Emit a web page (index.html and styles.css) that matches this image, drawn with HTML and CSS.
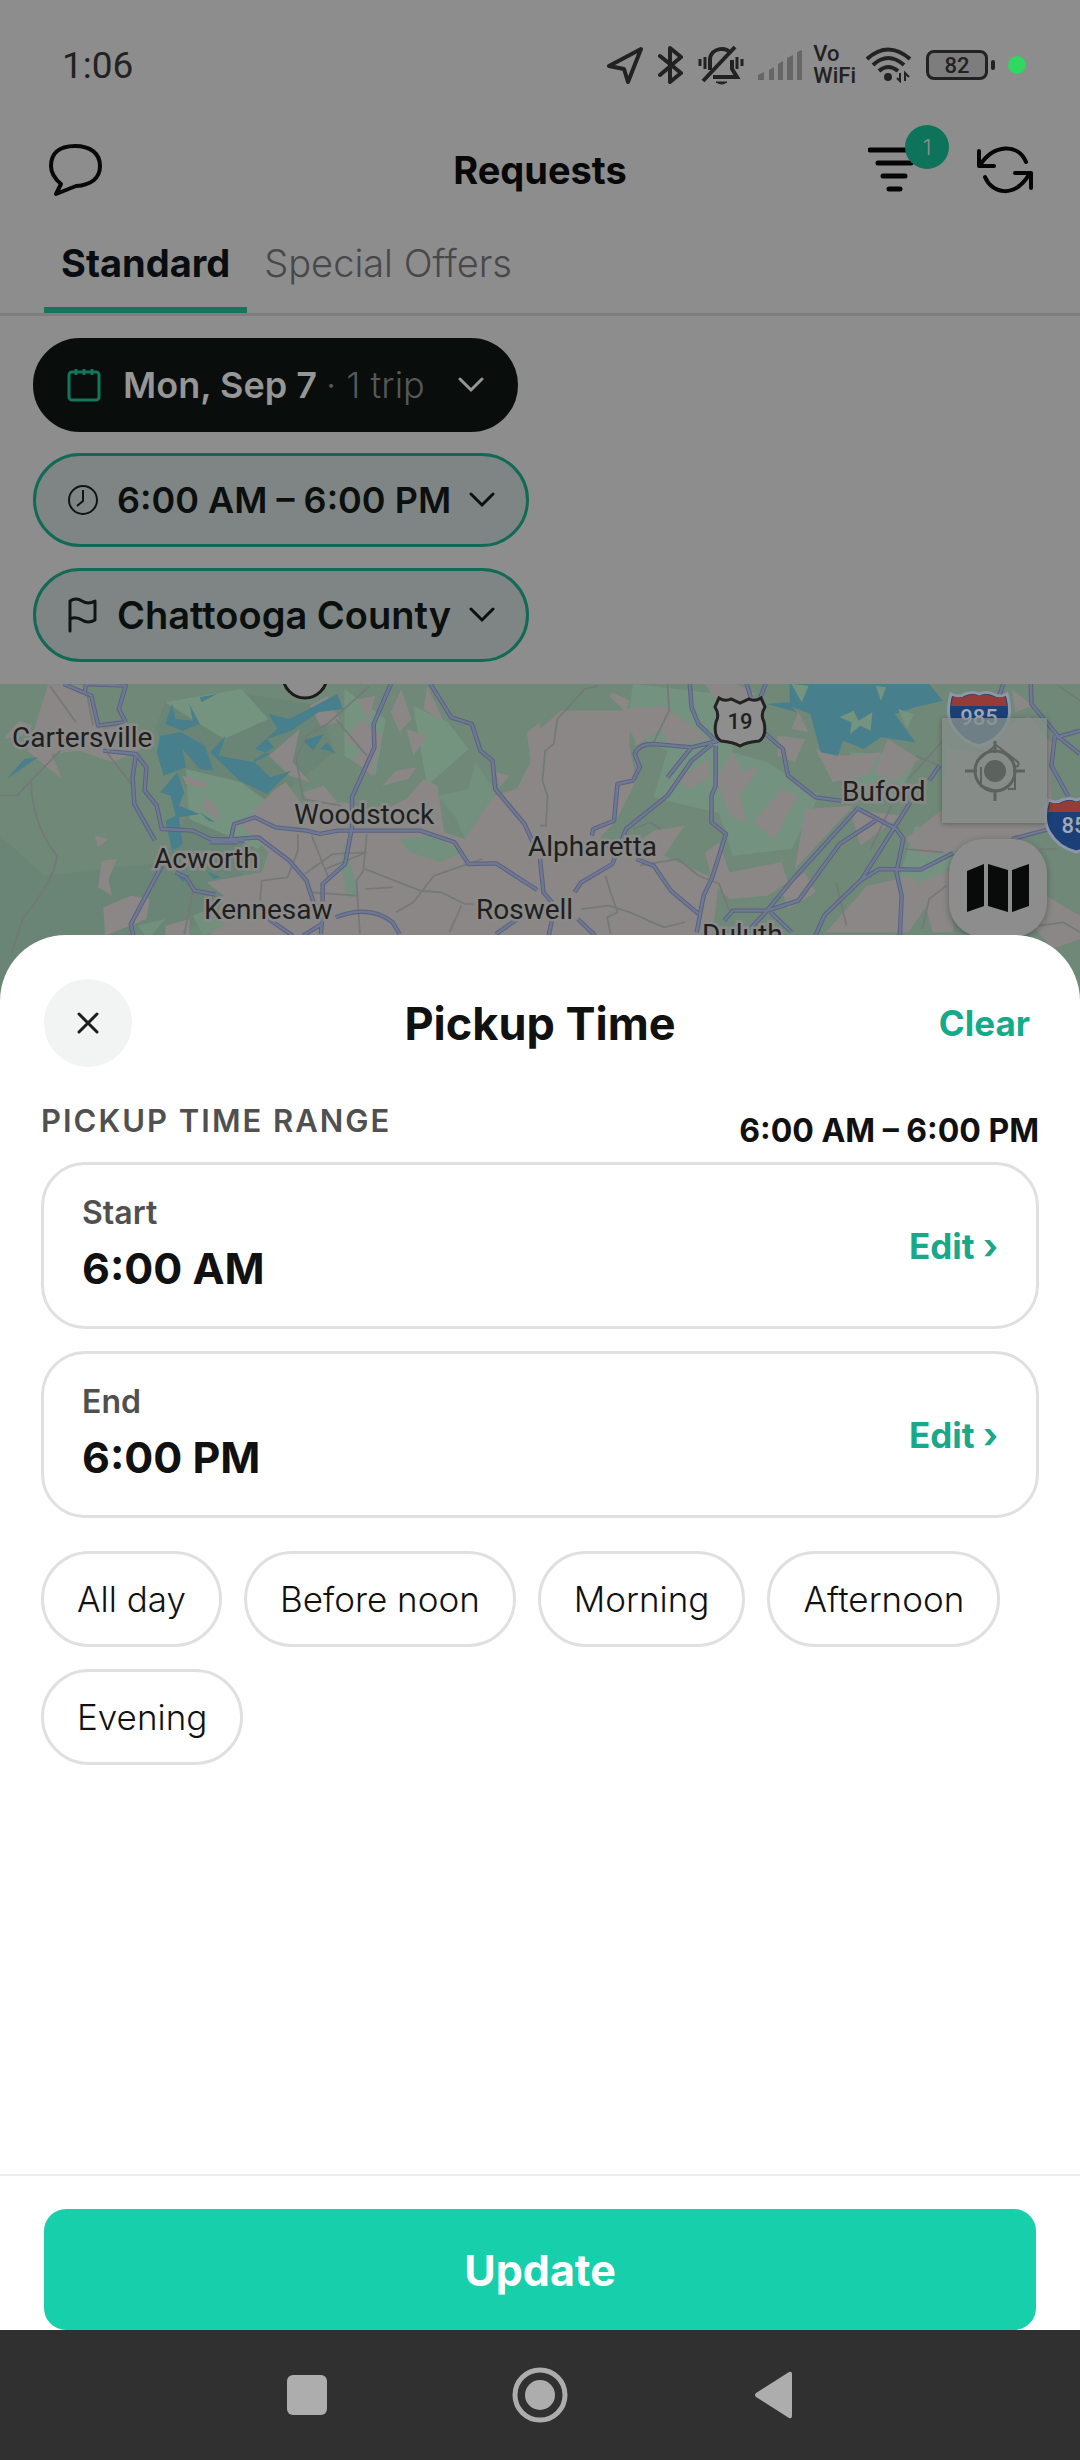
FILE: index.html
```html
<!DOCTYPE html>
<html lang="en">
<head>
    <meta charset="UTF-8">
    <meta name="viewport" content="width=device-width, initial-scale=1.0">
    <title>Requests</title>
    <link rel="stylesheet" href="styles.css">
</head>
<body>
    <div class="status-bar">
        <span class="clock">1:06</span>
        <div class="status-icons">
            <svg width="37" height="38" viewBox="0 0 37 38" fill="none" stroke="#222" stroke-width="4" stroke-linejoin="round"><path d="M34 3 2 20l15 3 4 13z"/></svg>
            <svg class="bluetooth" width="26" height="40" viewBox="0 0 26 40" fill="none" stroke="#222" stroke-width="4" stroke-linejoin="round" stroke-linecap="round"><path d="M2 11 23 28 12 37V3l11 9L2 30"/></svg>
            <svg class="bell" width="46" height="40" viewBox="0 0 46 40" fill="none" stroke="#222" stroke-width="3"><path d="M12 25V15C12 2 31 1 32 9M34 15v9l5 8H15M5 36 37 2" stroke-width="4"/><path d="M18 37h11q-5 4-11 0z" fill="#222" stroke-width="1"/><path d="M2 14v7M7 12v12M39 12v12M44 14v7"/></svg>
            <svg class="signal" width="45" height="30" viewBox="0 0 45 30" fill="#666"><path d="M0 25l6-3v8H0zM11 20l5-3v13h-5zM20 14l5-3v19h-5zM29 8l6-3v25h-6zM39 2l5-2v30h-5z"/></svg>
            <span class="vowifi"><span>Vo</span><span>WiFi</span></span>
            <svg class="wifi" width="46" height="36" viewBox="0 0 46 36" fill="none" stroke="#222" stroke-width="4"><path d="M1 12Q22-7 44 12M7 18Q22 4 38 18M13 24q9-8 19 0"/><circle cx="22" cy="30" r="2"/><path d="M34 26v8l-3-3M39 34v-8l4 4" stroke-width="2"/></svg>
            <span class="battery">82</span>
            <span class="dot"></span>
        </div>
    </div>

    <header class="header">
        <button class="icon-button" aria-label="Messages">
            <svg width="56" height="54" viewBox="0 0 56 54" fill="none" stroke="#080808" stroke-width="4" stroke-linejoin="round"><path d="M29 3C12 3 5 11 5 23c0 8 4 13 10 18L10 51l20-8C45 42 54 35 54 23 54 10 44 3 29 3z"/></svg>
        </button>
        <h1>Requests</h1>
        <div class="header-actions">
            <button class="icon-button filter" aria-label="Filters">
                <svg width="50" height="48" viewBox="0 0 50 48" stroke="#050505" stroke-width="5" stroke-linecap="round"><path d="M2 4h42M10 17h33M15 30h22M21 43h11"/></svg>
                <span class="badge">1</span>
            </button>
            <button class="icon-button" aria-label="Refresh">
                <svg width="58" height="50" viewBox="0 0 58 50" fill="none" stroke="#050505" stroke-width="4" stroke-linecap="round" stroke-linejoin="round"><path d="M3 6v15h15M4 20C18-1 42-2 50 17M9 32c7 17 30 22 45-4M39 28h16v15"/></svg>
            </button>
        </div>
    </header>

    <nav class="tabs">
        <button class="tab active">Standard</button>
        <button class="tab">Special Offers</button>
    </nav>

    <div class="filters">
        <button class="pill dark">
            <svg width="34" height="34" viewBox="0 0 34 34" fill="none" stroke="#14745c" stroke-width="3"><rect x="2" y="4" width="30" height="28" rx="3"/><path d="M9 1v6M17 1v6M25 1v6"/></svg>
            <span class="pill-text">Mon, Sep 7 <span class="trips">· 1 trip</span></span>
            <svg class="chevron" width="26" height="16" viewBox="0 0 26 16"><path d="M2 2l11 11L24 2"/></svg>
        </button>
        <button class="pill">
            <svg width="32" height="32" viewBox="0 0 32 32" fill="none" stroke="#101414" stroke-width="2"><circle cx="16" cy="16" r="14"/><path d="M16 6v11l-6 5"/></svg>
            <span class="pill-text">6:00 AM – 6:00 PM</span>
            <svg class="chevron" width="26" height="16" viewBox="0 0 26 16"><path d="M2 2l11 11L24 2"/></svg>
        </button>
        <button class="pill place">
            <svg width="32" height="36" viewBox="0 0 32 36" fill="none" stroke="#101414" stroke-width="3" stroke-linejoin="round" stroke-linecap="round"><path d="M3 34V4q6-4 12 0t13 0v19q-7 4-13 0T3 22"/></svg>
            <span class="pill-text">Chattooga County</span>
            <svg class="chevron" width="26" height="16" viewBox="0 0 26 16"><path d="M2 2l11 11L24 2"/></svg>
        </button>
    </div>

    <div class="map">
        <svg class="map-canvas" viewBox="0 0 1080 317" preserveAspectRatio="xMidYMin slice">
            <defs>
                <!-- the west and east tiles are drawn on a 1568 x 990 grid -->
                <g id="roads-west">
                    <path d="M185 45l80 35 20 90 70-10M245 75l5-30 115 5-20 70 20 40M300 245l95 10-10 70 5 80 60 110M395 255l30 40-5 70 35 45 15 70 90 5 60 30 130-10 90 70 50 60 25 80M475 480l85 5 50 25 100 5M670 510l10-45 60-20 60 30 90 10 40 10 50-10h240l100 35 40 65 80-2 120 80M1135 45l-50 120 2 70-65 150v90l-20 110-65 60v80l-5 70M470 590l-90 175 8 40M510 610l30 15 25 40 60 12M780 750l70 50M880 800l55-35M975 745q100-40 165 15l20 35M1250 45l60 100 60 20 25 80 35 30 8 85 85 105 35 80M1440 795l70-50M610 520h80"/>
                </g>
                <g id="roads-east">
                    <path d="M150 500l5-20 60-25 10-110 45-10 20-40-15-40q10-30 55-30l110 10 70-18M500 225l-60 50-70 105-120 100-40 105-90 55-20 30M435 45l5 70 20 50 55 55M510 230v120l-12 30v80l42 35-40 130-25 55-20 110M520 215l-80 20-70 90M600 45l12 40M655 45l-15 40M650 190l55 50 15 80 80 65 90 12M925 415L735 630l-80 100-45 50M975 455l-105 70-120 170-90 30h-100l-25 30M925 420l110 60 20 30-20 100 15 70-5 120M1075 400L935 630 825 740l-25 60M1160 290l-30 45M930 635l55-35 120 2 95-50M1370 510l110-30M280 570l50 20 50 75 80 70M0 570l10 100 50 60M110 750l50 50M40 730l-15 70M1425 45l2 60 80 100 61 50M1495 200l-10 90 50 95M1500 205l68-20M1345 45l-20 60M670 730l60 60"/>
                </g>
            </defs>

            <rect width="1080" height="317" fill="#708878"/>
            <g transform="translate(0 -15) scale(.3444 .3333)">
                <path fill="#688573" d="M130 620l340-40 90-180-110-220 30-80 210-30 240 40 40 140-190 160-90 250-200 180-280 150H0V500z" opacity=".7"/>
                <path fill="#759480" d="M480 100l220-40 80 90-130 60zM540 300l160 40 120 90-70 110-200-90zM1000 60l120 90-30 170-90-60zM1200 110l100 50 60 80-120 110z"/>
                <g class="land">
                    <path d="M610 800l40-120-50-40 160-30 20-60-80-80 50-60 50-50 30-20 50 70 120-10 100 30 80-40 50-60 40 20 20 140 60 20 20-110 130-40 40-80-10-90 38-30v640z"/>
                    <path d="M140 45l110 5 20 70 30 60 80-15 30 75-80 40-100-35-80 10 30 75-55-45-45-40zM295 575l45-5-25 60 10 50-40-25zM300 715l80-35 55 10-10 60-120 50zM10 210l45-55 40 15-30 30zM530 320l70 20v20l-60-15zM600 385l30 30 10 40-55-35zM275 500l40 10-30 25zM780 260l90-80-20 100 50 60-60-20zM900 110l50-30 40 80-60 10zM1000 210l50-60 60 50-30 120-60-50 30-20zM1040 90l50-10-20 80zM1165 60l30 90-35 40-25-60zM1180 180l60 20-40 60zM1110 350l40-45 60-10-25 35zM880 370l60-20 40 50-70 20zM1440 310l40 10-30 35zM480 770l70-20v50h-70zM1240 50l50 110-60-40z"/>
                </g>
                <path fill="#72907d" d="M1160 510l100-10 80 50-60 30-90-30zM1270 380l90-20 20-80 60 90-90 140-30-70zM1000 520l40 150-30 20-20-100zM400 770l80-20-50 60zM560 740l70-30 20 60-60 30z"/>
                <g class="water">
                    <path d="M500 105l10 45 50 5-10-50 30 60-50 20-50-20zM465 200l60-10 70 40 25 75-40-5-50-60 10 55-65 25-20-70zM610 250l45-50-20 60 100 20 50-25-45-15 65-60-25-45 60 15 140-75 15 45-70 10-80 55-70 25 20 25-60 40 50 50 60-20-70 70-80-40-40-40zM465 370l50-60 20 60-15 40 60 25-60 10 10 80-30 20-20-90 30-15-15-60zM880 215l60-20-30 50zM930 240l20-20 25 35-20-10zM20 330l50-60 40-5zM580 85l50-10-45 25zM580 430l45 30-20-5zM510 610l40 10-20 20zM600 605l40 20-20 5zM495 500l30-10-5 50-15-20z"/>
                </g>
                <g class="minor">
                    <path d="M145 50l75 110M250 60l20 110M175 245l-85 90-40 45H0M90 340q5 130 75 220 0 60-100 190L35 850M310 250l75 100M1075 50L950 165l-60 35-30 70 20 120M975 150l90 110M880 390l110 20M865 495v50l-30 80-75 10-5 60M905 500l50 130M1065 495l-10 110-20 30 10 160M945 600l120-50-100 5-80 60M1060 600l160 65 60 5 70 35h25M1400 570l-140 50-60 80-50 30M1060 660l80-5M560 670l-25 125M905 670l130 10M1340 710l-35 80"/>
                </g>
                <use class="road-edge" href="#roads-west"/>
                <use class="road-fill" href="#roads-west"/>
            </g>
            <g transform="translate(540 -15) scale(.3444 .3333)">
                <path fill="#749280" d="M270 45l250 30 40 160-30 200-200-50 40-140-120-60zM560 250l100 30 150 100-80 160-170 20-60-190zM1090 470l130 60-60 120-130 20zM900 250l200 10-60 120-130 10z"/>
                <g class="land">
                    <path d="M0 180l60-55h200v110l20 100-60 120-70 80 100 10 80-60 90-15-60 90 160 75-20 165H0z"/>
                    <path d="M210 70l50 25-10 35-50-50zM480 45h90l60 30-80 50-40-30zM240 120l120-10 130 100-110 20-30-50-70 50zM520 520l30 90 150-30-20-70-60-50 80-100 50 20-70 130 40 130-60 40-110 10-50-50-20-90zM560 250l30 60 50-20-60 90 20 80-50-20-40-110zM400 330l90-60v60l-60 30zM690 200l80 10-30 70-50-20zM750 130l30 60-50-10zM800 240l80 20 110-10-40 70-100 20zM770 420l140-10-170 190zM1010 210l90 60-70 70-60-30zM900 420l150 20-120 90zM1060 510l110-90 10-180 300 30 10 200-180 60-200 30zM950 650l130-30 50 80-60 90H830zM1100 640l100-40v190h-60zM1240 220l180-80 80 100-40 100zM1370 60l60 50-50 20zM1470 680l98 60v70l-80 30-90-110zM700 660l70-50 30 60-80 50z"/>
                </g>
                <g class="water">
                    <path d="M725 45h405l40 50-80 20-60 20 60 85-100-15-50 35-60-25-15 45-50-10-30-115-60-25z"/>
                    <path d="M660 105l60-5 25 30z"/>
                </g>
                <path fill="#759480" d="M730 45l50 5-20 50zM910 125l15 30 40-25-5 55-30-15-30 25 5-35-35-15zM975 50l30 5-15 40zM1040 120l45 15-20 45z"/>
                <g class="minor">
                    <path d="M170 50l-40 10-80 90-10 75-25 20-8 90 15 45-5 90H0M370 45l5 80-45 95M270 480l50-20 30 20M190 620l15 50 20 60-30 15 10 50M120 720l80-10 60 20 100 45 60-15M290 590l110-20 60 50 60 25 30 80M1090 260l70 30M1070 330l130-150M960 540l60-130M1060 540l110 10M860 640l30 130M1450 540h50M1180 650l-50 40-20 90M1450 770l70-10 48 30M1505 50l63 45"/>
                </g>
                <use class="road-edge" href="#roads-east"/>
                <use class="road-fill" href="#roads-east"/>
            </g>

            <!-- highway shields -->
            <circle cx="305" cy="-8" r="22" fill="#8d8d8d" stroke="#1b1b1b" stroke-width="3"/>
            <path d="M719 14q6 4 12 1l9 4 9-4q6 3 12-1l4 9q-5 8-1 15 3 14-5 19-12 1-19 5-7-4-19-5-8-5-5-19 4-7-1-15z" fill="#8e8e8e" stroke="#222" stroke-width="3"/>
            <text class="shield-text" x="740" y="45">19</text>
            <g id="shield-85">
                <path d="M951 10q8 4 14 0 8-3 14 0 8-3 14 0 8 4 14 0 6 21-2 33-8 14-26 19-18-5-26-19-8-12-2-33z" fill="#1b4078" stroke="#8e96a8" stroke-width="3" />
                <path d="M953 12q8 3 13 0 7-3 13 0 7-3 13 0 7 3 13 0l2 10h-56z" fill="#943c35"/>
            </g>
            <use href="#shield-85" x="97" y="106"/>
            <text class="shield-text light" x="979" y="41">985</text>
            <text class="shield-text light" x="1074" y="149">85</text>

            <g class="places">
                <text x="12" y="63">Cartersville</text>
                <text x="294" y="140">Woodstock</text>
                <text x="154" y="184">Acworth</text>
                <text x="204" y="235">Kennesaw</text>
                <text x="528" y="172">Alpharetta</text>
                <text x="476" y="235">Roswell</text>
                <text x="842" y="117">Buford</text>
                <text x="702" y="260">Duluth</text>
            </g>
        </svg>
        <div class="map-buttons">
            <button class="locate" aria-label="My location">
                <svg width="60" height="60" viewBox="0 0 60 60" fill="none" stroke="#5c6260" stroke-width="3"><circle cx="30" cy="30" r="20"/><circle cx="30" cy="30" r="11" fill="#5c6260" stroke="none"/><path d="M30 0v12M30 48v12M0 30h12M48 30h12"/><path d="M12 20 31 4l22 17q2 6-4 4M50 28v20h-7M16 26v19l12 4" stroke-width="2"/></svg>
            </button>
            <button class="layers" aria-label="Map">
                <svg width="62" height="48" viewBox="0 0 62 48" fill="#080b0a"><path d="M0 7 17 0v42L0 48zM21 0l20 6v42l-20-6zM45 6 62 0v42l-17 6z"/></svg>
            </button>
        </div>
    </div>

    <main class="sheet">
        <div class="sheet-header">
            <button class="close" aria-label="Close">
                <svg width="22" height="22" viewBox="0 0 22 22" stroke="#1a1f1e" stroke-width="3" stroke-linecap="round"><path d="M2 2l18 18M20 2L2 20"/></svg>
            </button>
            <h2>Pickup Time</h2>
            <button class="clear">Clear</button>
        </div>

        <div class="sheet-body">
            <div class="range-row">
                <h3>PICKUP TIME RANGE</h3>
                <span class="range-value">6:00 AM – 6:00 PM</span>
            </div>
            <div class="time-card">
                <div>
                    <div class="time-label">Start</div>
                    <div class="time-value">6:00 AM</div>
                </div>
                <button class="edit">Edit ›</button>
            </div>
            <div class="time-card">
                <div>
                    <div class="time-label">End</div>
                    <div class="time-value">6:00 PM</div>
                </div>
                <button class="edit">Edit ›</button>
            </div>
            <div class="chips">
                <button class="chip">All day</button>
                <button class="chip">Before noon</button>
                <button class="chip">Morning</button>
                <button class="chip">Afternoon</button>
                <button class="chip">Evening</button>
            </div>
        </div>

        <div class="sheet-footer">
            <button class="update">Update</button>
        </div>
    </main>

    <div class="nav-bar">
        <button class="icon-button" aria-label="Recent apps">
            <svg width="60" height="60" viewBox="0 0 60 60" fill="#adadad"><rect x="10" y="10" width="40" height="40" rx="6"/></svg>
        </button>
        <button class="icon-button" aria-label="Home">
            <svg width="60" height="60" viewBox="0 0 60 60" fill="#adadad"><circle cx="30" cy="30" r="15"/><circle cx="30" cy="30" r="25" fill="none" stroke="#adadad" stroke-width="5"/></svg>
        </button>
        <button class="icon-button" aria-label="Back">
            <svg width="60" height="60" viewBox="0 0 60 60" fill="#adadad"><path d="M46 7q3-1 3 2v42q0 3-3 2L13 32q-2-2 0-4z"/></svg>
        </button>
    </div>
</body>
</html>
```
FILE: styles.css
```css
* {
    box-sizing: border-box;
}

body {
    display: flex;
    flex-direction: column;
    min-height: 100vh;
    margin: 0;
    background-color: #8d8d8d;
    color: #111;
    font-family: Inter, "Liberation Sans", sans-serif;
}

h1, h2, h3 {
    margin: 0;
}

button {
    padding: 0;
    border: none;
    background: none;
    color: inherit;
    font-family: inherit;
    white-space: nowrap;
    cursor: pointer;
}

svg {
    display: block;
    flex: none;
}

/* status bar */
.status-bar {
    display: flex;
    align-items: center;
    justify-content: space-between;
    height: 130px;
    padding: 0 54px 0 62px;
    color: #222;
    font-family: Roboto, sans-serif;
}

.clock {
    font-size: 37px;
    font-weight: 400;
}

.status-icons {
    display: flex;
    align-items: center;
    gap: 14px;
}

.vowifi {
    display: flex;
    flex-direction: column;
    margin-left: -4px;
    font-size: 22px;
    font-weight: 500;
    line-height: 22px;
}

.wifi {
    margin-left: -4px;
}

.battery {
    position: relative;
    width: 62px;
    height: 30px;
    margin-right: 6px;
    border: 3px solid #222;
    border-radius: 8px;
    background-color: #7d7d7d;
    font-size: 22px;
    font-weight: 500;
    line-height: 25px;
    text-align: center;
}

.battery::after {
    content: "";
    position: absolute;
    top: 7px;
    right: -10px;
    width: 4px;
    height: 10px;
    border-radius: 2px;
    background-color: #222;
}

.dot {
    width: 18px;
    height: 18px;
    border-radius: 50%;
    background-color: #30d860;
}

/* header */
.header {
    display: grid;
    grid-template-columns: 1fr auto 1fr;
    align-items: center;
    height: 80px;
    padding: 0 46px;
}

.header h1 {
    color: #080808;
    font-size: 38px;
    font-weight: 700;
}

.header-actions {
    display: flex;
    justify-content: flex-end;
    gap: 58px;
}

.filter {
    position: relative;
}

.badge {
    position: absolute;
    top: -20px;
    left: 37px;
    width: 44px;
    height: 44px;
    border-radius: 50%;
    background-color: #0d745b;
    color: #8d8d8d;
    font-size: 22px;
    font-weight: 300;
    line-height: 44px;
}

.tabs {
    display: flex;
    height: 106px;
    padding: 0 44px;
    border-bottom: 3px solid #7e7e7e;
}

.tab {
    padding: 9px 17px 0;
    border-bottom: 6px solid transparent;
    color: #48484c;
    font-size: 38px;
    font-weight: 300;
}

.tab.active {
    border-color: #14745c;
    color: #090d12;
    font-weight: 700;
}

.filters {
    display: flex;
    flex-direction: column;
    align-items: flex-start;
    gap: 21px;
    padding: 22px 33px;
}

.pill {
    display: flex;
    align-items: center;
    gap: 18px;
    height: 94px;
    padding: 0 31px;
    border: 3px solid #126a56;
    border-radius: 47px;
    background-color: #7f8584;
    color: #0b0f0e;
    font-size: 36px;
    font-weight: 600;
}

.pill.place {
    font-size: 38px;
}

.pill.dark {
    gap: 22px;
    border-color: #090d0c;
    background-color: #090d0c;
    color: #969696;
}

.trips {
    color: #565858;
    font-weight: 300;
}

.chevron {
    fill: none;
    stroke: currentColor;
    stroke-width: 3;
    stroke-linecap: round;
}

.dark .chevron {
    margin-left: 11px;
}

/* map */
.map {
    position: relative;
    height: 317px;
    overflow: hidden;
}

.map-canvas {
    width: 100%;
    height: 100%;
}

.land {
    fill: #8a8786;
}

.water {
    fill: #487f8c;
}

.minor {
    fill: none;
    stroke: #747978;
    stroke-width: 5;
}

.road-edge,
.road-fill {
    fill: none;
    stroke: #5a6280;
    stroke-width: 13;
    stroke-linejoin: round;
}

.road-fill {
    stroke: #6f7993;
    stroke-width: 7;
}

.places {
    fill: #1f1f1f;
    stroke: #8a8a88;
    stroke-width: 5;
    paint-order: stroke;
    font-family: Roboto, sans-serif;
    font-size: 28px;
}

.shield-text {
    fill: #1f1f1f;
    font-family: Roboto, sans-serif;
    font-size: 22px;
    font-weight: 500;
    text-anchor: middle;
}

.shield-text.light {
    fill: #a3a9b5;
}

.map-buttons {
    position: absolute;
    top: 34px;
    right: 33px;
    display: flex;
    flex-direction: column;
    align-items: flex-end;
    gap: 16px;
}

.locate,
.layers {
    display: flex;
    align-items: center;
    justify-content: center;
}

.locate {
    width: 105px;
    height: 105px;
    background-color: rgba(133, 142, 138, 0.8);
    box-shadow: 0 1px 5px rgba(0, 0, 0, 0.3);
}

.layers {
    width: 98px;
    height: 98px;
    border-radius: 34px;
    background-color: #8d8d8d;
    box-shadow: 0 2px 6px rgba(0, 0, 0, 0.3);
}

/* bottom sheet */
.sheet {
    position: relative;
    display: flex;
    flex: 1;
    flex-direction: column;
    margin-top: -66px;
    border-radius: 66px 66px 0 0;
    background-color: #fff;
}

.sheet-header {
    display: grid;
    grid-template-columns: 1fr auto 1fr;
    align-items: center;
    padding: 44px 44px 32px;
}

.sheet-header h2 {
    font-size: 45px;
    font-weight: 700;
}

.close {
    display: flex;
    align-items: center;
    justify-content: center;
    width: 88px;
    height: 88px;
    border-radius: 50%;
    background-color: #f2f3f3;
}

.clear {
    justify-self: end;
    padding-right: 6px;
    color: #14ab8a;
    font-size: 35px;
    font-weight: 700;
}

.sheet-body {
    flex: 1;
    padding: 0 41px;
}

.range-row {
    display: flex;
    justify-content: space-between;
    height: 63px;
}

.range-row h3 {
    color: #505050;
    font-size: 31px;
    font-weight: 600;
    letter-spacing: 2px;
    line-height: 44px;
}

.range-value {
    font-size: 32px;
    font-weight: 700;
    line-height: 64px;
}

.time-card {
    display: flex;
    align-items: center;
    justify-content: space-between;
    height: 167px;
    margin-bottom: 22px;
    padding: 0 38px;
    border: 3px solid #e0e0e0;
    border-radius: 44px;
}

.time-label {
    color: #505050;
    font-size: 32px;
    font-weight: 600;
    line-height: 44px;
}

.time-value {
    font-size: 43px;
    font-weight: 700;
    line-height: 66px;
}

.edit {
    color: #1aa88a;
    font-size: 35px;
    font-weight: 700;
}

.chips {
    display: flex;
    flex-wrap: wrap;
    gap: 22px;
    padding-top: 11px;
}

.chip {
    height: 96px;
    padding: 0 33px;
    border: 3px solid #e0e0e0;
    border-radius: 48px;
    font-size: 35px;
    font-weight: 300;
}

.sheet-footer {
    padding: 33px 44px 0;
    border-top: 2px solid #eee;
}

.update {
    width: 100%;
    height: 121px;
    border-radius: 22px;
    background-color: #18cfac;
    color: #fff;
    font-size: 43px;
    font-weight: 700;
}

/* system navigation */
.nav-bar {
    display: flex;
    align-items: center;
    justify-content: center;
    gap: 173px;
    height: 130px;
    background-color: #303030;
}
```
